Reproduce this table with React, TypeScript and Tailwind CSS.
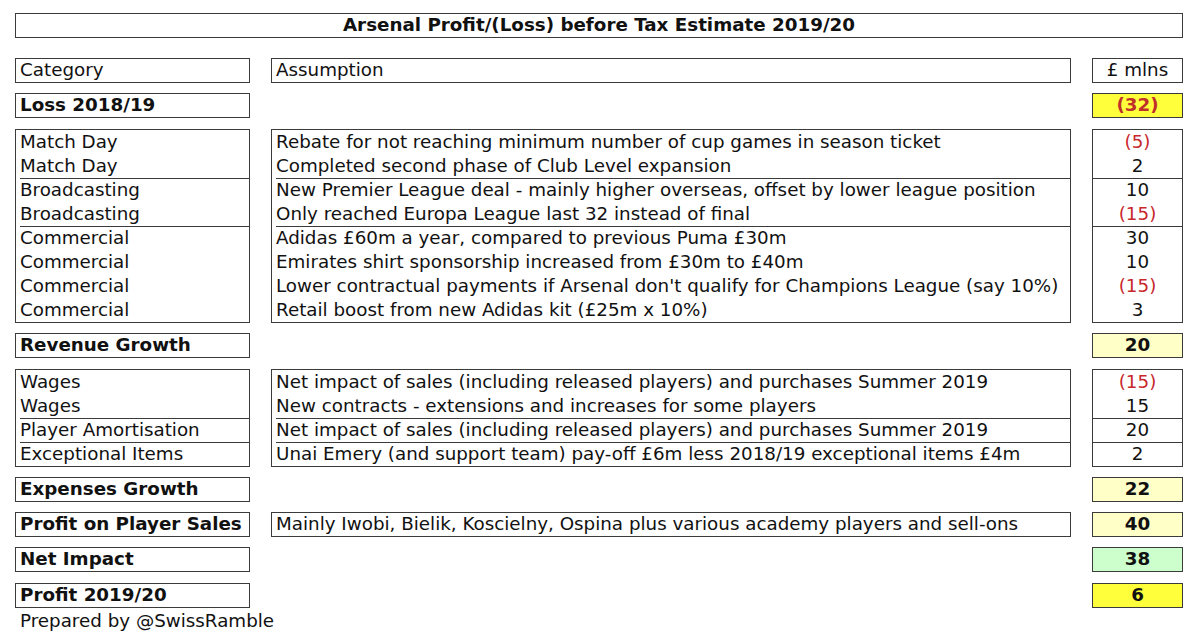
import React from 'react'

type Line = { cat: string; text: string; value: string; neg?: boolean }

const revenueGroups: Line[][] = [
  [
    { cat: 'Match Day', text: 'Rebate for not reaching minimum number of cup games in season ticket', value: '(5)', neg: true },
    { cat: 'Match Day', text: 'Completed second phase of Club Level expansion', value: '2' },
  ],
  [
    { cat: 'Broadcasting', text: 'New Premier League deal - mainly higher overseas, offset by lower league position', value: '10' },
    { cat: 'Broadcasting', text: 'Only reached Europa League last 32 instead of final', value: '(15)', neg: true },
  ],
  [
    { cat: 'Commercial', text: 'Adidas £60m a year, compared to previous Puma £30m', value: '30' },
    { cat: 'Commercial', text: 'Emirates shirt sponsorship increased from £30m to £40m', value: '10' },
    { cat: 'Commercial', text: "Lower contractual payments if Arsenal don't qualify for Champions League (say 10%)", value: '(15)', neg: true },
    { cat: 'Commercial', text: 'Retail boost from new Adidas kit (£25m x 10%)', value: '3' },
  ],
]

const expenseGroups: Line[][] = [
  [
    { cat: 'Wages', text: 'Net impact of sales (including released players) and purchases Summer 2019', value: '(15)', neg: true },
    { cat: 'Wages', text: 'New contracts - extensions and increases for some players', value: '15' },
  ],
  [{ cat: 'Player Amortisation', text: 'Net impact of sales (including released players) and purchases Summer 2019', value: '20' }],
  [{ cat: 'Exceptional Items', text: 'Unai Emery (and support team) pay-off £6m less 2018/19 exceptional items £4m', value: '2' }],
]

const box = 'border border-[#3b3b3b]'

function Group({ groups }: { groups: Line[][] }) {
  const col = (render: (l: Line) => React.ReactNode, cls: string) => (
    <div className={`${box} ${cls}`}>
      {groups.map((g, i) =>
        g.map((l, j) => (
          // separator sits inside the 24px row so rows stay on a 24px grid
          <div
            key={`${i}-${j}`}
            className={`h-[24px] whitespace-nowrap ${
              i > 0 && j === 0 ? 'border-t border-[#3b3b3b] leading-[22px]' : 'leading-[23px]'
            }`}
          >
            {render(l)}
          </div>
        ))
      )}
    </div>
  )
  return (
    <div className="grid grid-cols-[235px_800px_91px] gap-x-[21px]">
      {col((l) => l.cat, 'pl-[4px]')}
      {col((l) => l.text, 'pl-[4px]')}
      {col((l) => <span className={l.neg ? 'text-[#c8282c]' : ''}>{l.value}</span>, 'text-center')}
    </div>
  )
}

function Summary({
  label,
  value,
  bg,
  note,
  red,
  mt,
}: {
  label: string
  value: string
  bg: string
  note?: string
  red?: boolean
  mt: string
}) {
  return (
    <div className={`grid grid-cols-[235px_800px_91px] gap-x-[21px] ${mt}`}>
      <div className={`${box} h-[25px] leading-[22px] pl-[4px] font-bold`}>{label}</div>
      {note ? <div className={`${box} h-[25px] leading-[22px] pl-[4px] whitespace-nowrap`}>{note}</div> : <div />}
      <div className={`${box} ${bg} h-[25px] leading-[22px] text-center font-bold ${red ? 'text-[#c0302a]' : ''}`}>
        {value}
      </div>
    </div>
  )
}

export default function App() {
  return (
    <div
      className="w-[1200px] h-[636px] bg-white text-[#111] text-[18.3px] pl-[15px] pt-[13px] overflow-hidden"
      style={{ fontFamily: '"DejaVu Sans", Verdana, sans-serif' }}
    >
      <div className={`${box} w-[1168px] h-[25px] leading-[22px] text-center font-bold`}>
        Arsenal Profit/(Loss) before Tax Estimate 2019/20
      </div>

      <div className="grid grid-cols-[235px_800px_91px] gap-x-[21px] mt-[20px]">
        <div className={`${box} h-[25px] leading-[22px] pl-[4px]`}>Category</div>
        <div className={`${box} h-[25px] leading-[22px] pl-[4px]`}>Assumption</div>
        <div className={`${box} h-[25px] leading-[22px] text-center`}>£ mlns</div>
      </div>

      <Summary label="Loss 2018/19" value="(32)" bg="bg-[#ffff3c]" red mt="mt-[10px]" />

      <div className="mt-[11px]">
        <Group groups={revenueGroups} />
      </div>

      <Summary label="Revenue Growth" value="20" bg="bg-[#ffffc8]" mt="mt-[10px]" />

      <div className="mt-[11px]">
        <Group groups={expenseGroups} />
      </div>

      <Summary label="Expenses Growth" value="22" bg="bg-[#ffffc8]" mt="mt-[10px]" />
      <Summary
        label="Profit on Player Sales"
        value="40"
        bg="bg-[#ffffc8]"
        note="Mainly Iwobi, Bielik, Koscielny, Ospina plus various academy players and sell-ons"
        mt="mt-[10px]"
      />
      <Summary label="Net Impact" value="38" bg="bg-[#ccffcc]" mt="mt-[10px]" />
      <Summary label="Profit 2019/20" value="6" bg="bg-[#ffff3c]" mt="mt-[11px]" />

      <div className="pl-[5px] leading-[24px] mt-[1px]">Prepared by @SwissRamble</div>
    </div>
  )
}
